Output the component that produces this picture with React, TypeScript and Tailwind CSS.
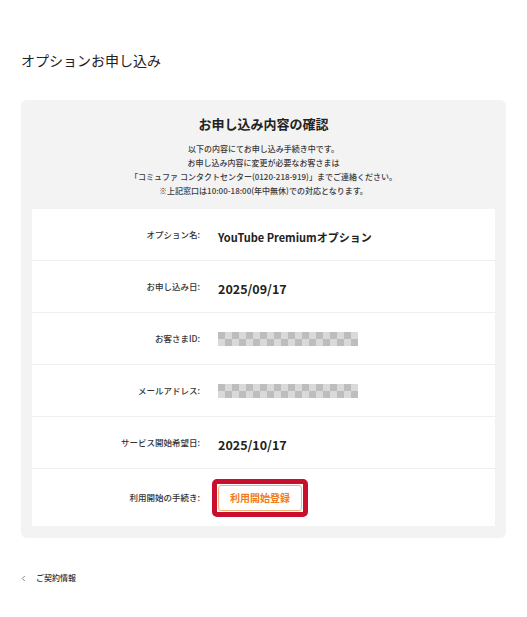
import React from "react";

const rows = [
  { label: "オプション名:", value: "YouTube Premiumオプション", kind: "text" },
  { label: "お申し込み日:", value: "2025/09/17", kind: "date" },
  { label: "お客さまID:", value: "", kind: "mask" },
  { label: "メールアドレス:", value: "", kind: "mask" },
  { label: "サービス開始希望日:", value: "2025/10/17", kind: "date" },
];

function Mask() {
  return (
    <div className="flex flex-col">
      {[0, 1].map((r) => (
        <div key={r} className="flex">
          {Array.from({ length: 20 }).map((_, c) => (
            <div
              key={c}
              className={
                (r + c) % 2 === 0
                  ? "h-[7px] w-[7px] bg-[#bdbdbd]"
                  : "h-[7px] w-[7px] bg-[#d9d9d9]"
              }
            />
          ))}
        </div>
      ))}
    </div>
  );
}

export default function App() {
  return (
    <div
      className="min-h-[617px] w-full bg-white text-[#222]"
      style={{ fontFamily: '"Noto Sans CJK JP", "Noto Sans", sans-serif' }}
    >
      <h1 className="px-[21px] pt-[50px] text-[14px] leading-[20px] font-normal">
        オプションお申し込み
      </h1>

      <section className="mx-[21px] mt-[30px] rounded-md bg-[#f3f3f3] px-[11px] pb-[12px]">
        <h2 className="pt-[15px] text-center text-[13px] leading-[18px] font-bold">
          お申し込み内容の確認
        </h2>
        <div className="mt-[9px] mb-[11px] text-center text-[8px] leading-[14px] font-medium text-[#3a3a3a]">
          <p>以下の内容にてお申し込み手続き中です。</p>
          <p>お申し込み内容に変更が必要なお客さまは</p>
          <p>「コミュファ コンタクトセンター(0120-218-919)」までご連絡ください。</p>
          <p>※上記窓口は10:00-18:00(年中無休)での対応となります。</p>
        </div>

        <div className="divide-y divide-[#efefef] bg-white">
          {rows.map((row) => (
            <div key={row.label} className="flex h-[52px] items-center">
              <div className="w-[168px] text-right text-[8.5px] font-medium text-[#333]">{row.label}</div>
              <div className="ml-[18px]">
                {row.kind === "mask" ? (
                  <Mask />
                ) : (
                  <span
                    className={
                      row.kind === "date"
                        ? "text-[12.5px] font-bold"
                        : "text-[11px] font-bold"
                    }
                  >
                    {row.value}
                  </span>
                )}
              </div>
            </div>
          ))}
          <div className="flex h-[57px] items-center">
            <div className="w-[168px] text-right text-[8.5px] font-medium text-[#333]">利用開始の手続き:</div>
            <div className="ml-[12px] rounded-[5px] border-[5px] border-[#c8102e] p-[1px]">
              <button className="flex h-[26px] w-[84px] items-center justify-center rounded-[3px] border border-[#f6b07a] bg-white text-[10px] font-bold text-[#f07c1c]">
                利用開始登録
              </button>
            </div>
          </div>
        </div>
      </section>

      <nav className="mt-[34px] flex items-center px-[21px] pb-[30px] text-[8px] leading-[12px]">
        <svg viewBox="0 0 6 8" className="h-[7px] w-[5px] text-[#7d879c]" fill="none" stroke="currentColor" strokeWidth="1.2">
          <path d="M4.5 1 L1.5 4 L4.5 7" />
        </svg>
        <span className="ml-[10px] font-medium text-[#333]">ご契約情報</span>
      </nav>
    </div>
  );
}
